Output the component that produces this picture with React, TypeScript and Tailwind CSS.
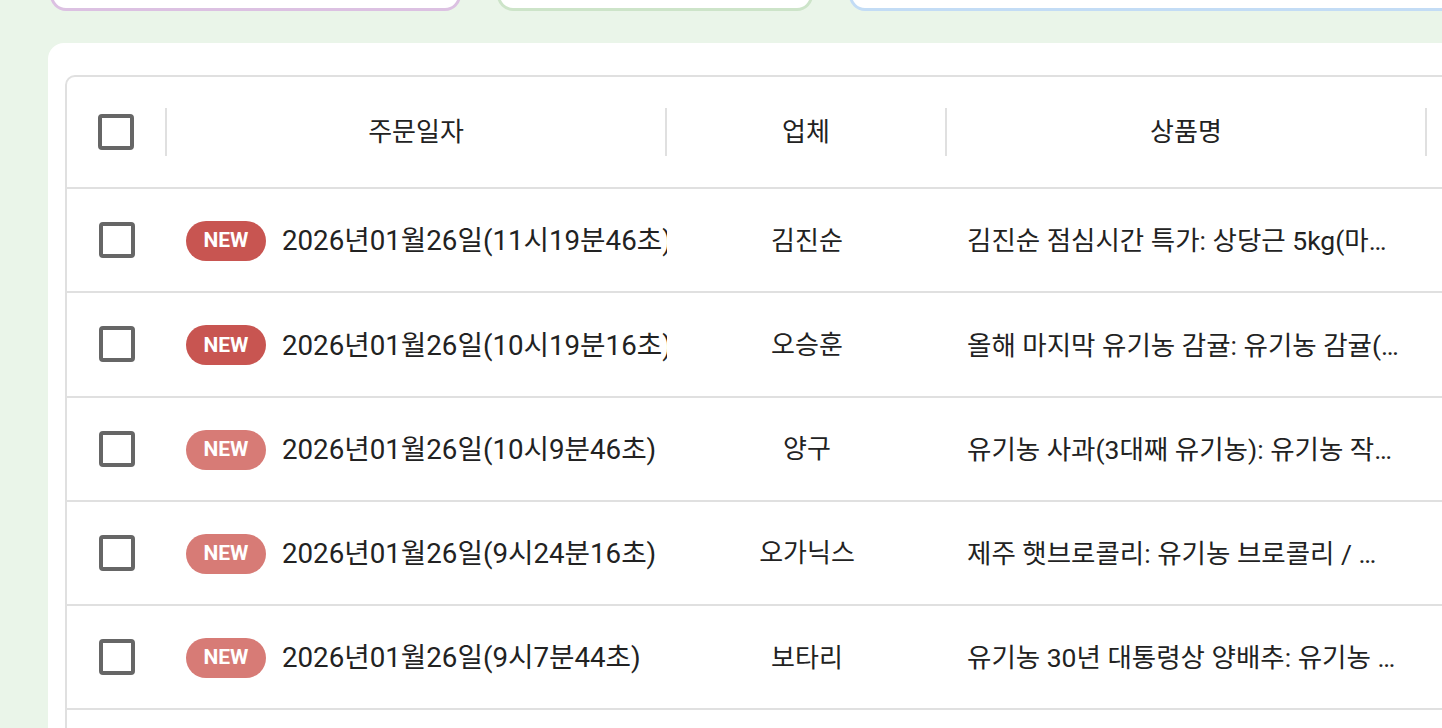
import React from 'react';

interface Order {
  id: number;
  date: string;
  vendor: string;
  product: string;
  fresh: boolean;
}

const orders: Order[] = [
  { id: 1, date: '2026년01월26일(11시19분46초)', vendor: '김진순', product: '김진순 점심시간 특가: 상당근 5kg(마트용 못난이)', fresh: true },
  { id: 2, date: '2026년01월26일(10시19분16초)', vendor: '오승훈', product: '올해 마지막 유기농 감귤: 유기농 감귤(중과) 5kg', fresh: true },
  { id: 3, date: '2026년01월26일(10시9분46초)', vendor: '양구', product: '유기농 사과(3대째 유기농): 유기농 작은 사과 3kg', fresh: false },
  { id: 4, date: '2026년01월26일(9시24분16초)', vendor: '오가닉스', product: '제주 햇브로콜리: 유기농 브로콜리 / 국내산 2kg', fresh: false },
  { id: 5, date: '2026년01월26일(9시7분44초)', vendor: '보타리', product: '유기농 30년 대통령상 양배추: 유기농 양배추 2통', fresh: false },
  { id: 6, date: '2026년01월26일(8시51분02초)', vendor: '김진순', product: '김진순 점심시간 특가: 상당근 5kg(마트용 못난이)', fresh: false },
];

const Checkbox: React.FC = () => (
  <div className="w-[36px] h-[36px] rounded-[4px] border-[4px] border-[#666666] bg-white" />
);

const HeaderCell: React.FC<{ width: string; children?: React.ReactNode }> = ({ width, children }) => (
  <div className={`${width} shrink-0 h-full flex items-center`}>
    <div className="flex-1 text-center text-[26px] text-[#222222]">{children}</div>
    <div className="w-[2px] h-[48px] bg-[#e0e0e0]" />
  </div>
);

const App: React.FC = () => {
  return (
    <div className="w-[1442px] h-[728px] overflow-hidden bg-[#eaf5e9] font-['Roboto','Noto_Sans_CJK_KR',sans-serif]">
      {/* summary cards, mostly scrolled off the top */}
      <div className="flex gap-[36px] pl-[50px] -mt-[110px]">
        <div className="w-[411px] h-[121px] shrink-0 bg-white border-[3px] border-[#dcc1e2] rounded-[16px]" />
        <div className="w-[316px] h-[121px] shrink-0 bg-white border-[3px] border-[#cde4c9] rounded-[16px]" />
        <div className="w-[700px] h-[121px] shrink-0 bg-white border-[3px] border-[#c3dcf5] rounded-[16px]" />
      </div>

      <div className="ml-[48px] mt-[32px] w-[1500px] bg-white rounded-[16px] pt-[32px] pl-[17px] pb-[40px]">
        <div className="w-[1440px] border-[2px] border-[#e0e0e0] rounded-[10px] overflow-hidden">
          {/* header */}
          <div className="flex h-[112px] items-center border-b-[2px] border-[#e0e0e0]">
            <div className="w-[100px] shrink-0 h-full flex items-center">
              <div className="flex-1 flex justify-center pr-[1px]">
                <Checkbox />
              </div>
              <div className="w-[2px] h-[48px] bg-[#e0e0e0]" />
            </div>
            <HeaderCell width="w-[500px]">주문일자</HeaderCell>
            <HeaderCell width="w-[280px]">업체</HeaderCell>
            <HeaderCell width="w-[480px]">상품명</HeaderCell>
            <HeaderCell width="w-[200px]">주문수량</HeaderCell>
          </div>

          {orders.map(o => (
            <div key={o.id} className="flex h-[104.25px] items-center border-b-[2px] border-[#e0e0e0]">
              <div className="w-[100px] shrink-0 flex justify-center pr-[1px]">
                <Checkbox />
              </div>
              <div className="w-[500px] shrink-0 flex items-center gap-[16px] pl-[19px] pt-[2px] overflow-hidden whitespace-nowrap">
                <span
                  className={`shrink-0 w-[80px] h-[40px] rounded-full flex items-center justify-center text-white font-bold text-[21px] ${
                    o.fresh ? 'bg-[#c85551]' : 'bg-[#d77b76]'
                  }`}
                >
                  NEW
                </span>
                <span className="text-[27.7px] text-[#222222]">{o.date}</span>
              </div>
              <div className="w-[280px] shrink-0 text-center text-[26px] text-[#222222] pt-[2px]">{o.vendor}</div>
              <div className="w-[480px] shrink-0 pl-[20px] pr-[28px] pt-[2px] text-[26.5px] text-[#222222] truncate">{o.product}</div>
              <div className="w-[200px] shrink-0" />
            </div>
          ))}
        </div>
      </div>
    </div>
  );
};

export default App;
